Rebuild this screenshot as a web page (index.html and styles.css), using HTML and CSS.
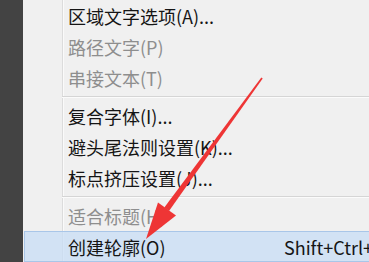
FILE: index.html
```html
<!DOCTYPE html>
<html lang="zh">
<head>
<meta charset="utf-8">
<link rel="stylesheet" href="styles.css">
</head>
<body>
<div class="screen">
  <div class="dock"></div>
  <div class="menu">
    <div class="item">区域文字选项(A)...</div>
    <div class="item disabled">路径文字(P)</div>
    <div class="item disabled">串接文本(T)</div>
    <div class="sep"></div>
    <div class="item">复合字体(I)...</div>
    <div class="item">避头尾法则设置(K)...</div>
    <div class="item">标点挤压设置(J)...</div>
    <div class="sep"></div>
    <div class="item disabled">适合标题(H)</div>
    <div class="item active"><span class="label">创建轮廓(O)</span><span class="key">Shift+Ctrl+O</span></div>
  </div>
  <svg class="arrow" width="369" height="262" viewBox="0 0 369 262">
    <polygon points="261.3,77.4 262.7,78.6 169,211 164.3,207.6" fill="#ee3535"/>
    <polygon points="146,239 158,202.5 176,215.5" fill="#ee3535"/>
  </svg>
</div>
</body>
</html>
```
FILE: styles.css
```css
html, body {
  margin: 0;
  padding: 0;
}
body {
  width: 369px;
  height: 262px;
  overflow: hidden;
  font-family: "Noto Sans CJK SC", "Noto Sans", sans-serif;
}
.screen {
  position: relative;
  display: flex;
  width: 369px;
  height: 262px;
  overflow: hidden;
}
.dock {
  width: 23px;
  flex: none;
  background: #434343;
}
.menu {
  flex: 1;
  display: flex;
  flex-direction: column;
  background: linear-gradient(to right, #f0f0f0 39px, #dcdcdc 39px, #dcdcdc 40px, #fafafa 40px, #fafafa 41px, #f0f0f0 41px);
}
.item {
  height: 31px;
  flex: none;
  display: flex;
  align-items: center;
  padding-left: 45px;
  font-size: 18px;
  color: #151515;
  white-space: nowrap;
}
.item.disabled {
  color: #8e8e8e;
}
.item.active {
  height: 29px;
  margin-left: 1px;
  padding-left: 43px;
  border: 1px solid #a9c6e8;
  background: rgba(200, 222, 246, 0.75);
}
.label {
  width: 216px;
  flex: none;
}
.key {
  flex: none;
}
.sep {
  height: 7px;
  flex: none;
  margin-left: 39px;
  background: linear-gradient(to bottom, transparent 3px, #d5d5d5 3px, #d5d5d5 4px, #fbfbfb 4px, #fbfbfb 5px, transparent 5px);
}
.arrow {
  position: absolute;
  left: 0;
  top: 0;
  pointer-events: none;
}
```
